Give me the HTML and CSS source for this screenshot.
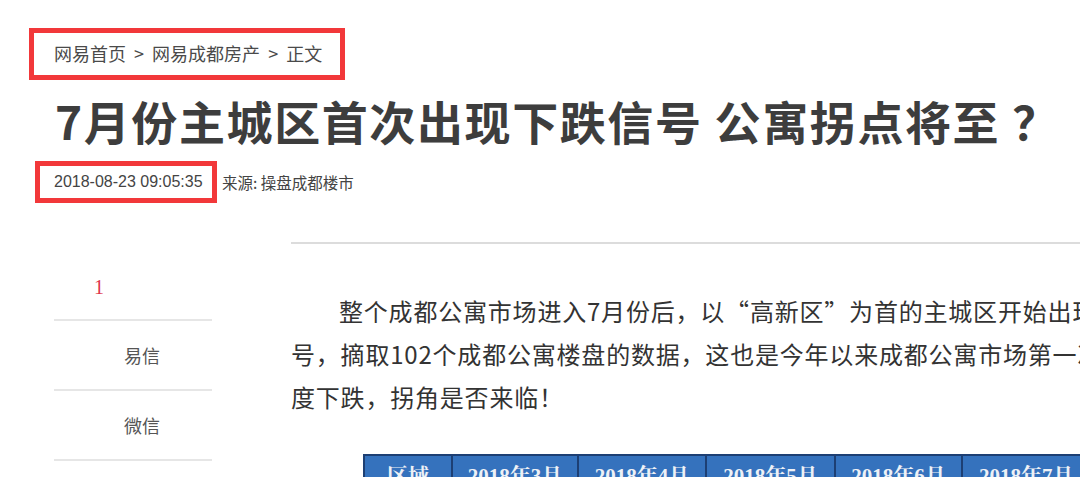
FILE: index.html
```html
<!DOCTYPE html>
<html lang="zh-CN">
<head>
  <meta charset="UTF-8" />
  <title>7月份主城区首次出现下跌信号 公寓拐点将至？</title>
  <link rel="stylesheet" href="styles.css">
</head>
<body>

  <div class="page">
    <div class="crumbs marked">
      网易首页 <span class="sep">&gt;</span> 网易成都房产 <span class="sep">&gt;</span> 正文
    </div>

    <h1>7月份主城区首次出现下跌信号 公寓拐点将至<span class="qmark">？</span></h1>

    <div class="meta">
      <span class="date marked">2018-08-23 09:05:35</span>
      <span class="source">来源: 操盘成都楼市</span>
    </div>

    <div class="main">
      <div class="share">
        <div class="share-count">1</div>
        <div class="share-item">易信</div>
        <div class="share-item">微信</div>
      </div>

      <div class="article">
        <p class="lead">
          <span class="line first">整个成都公寓市场进入7月份后，以“高新区”为首的主城区开始出现下跌信</span>
          <span class="line">号，摘取102个成都公寓楼盘的数据，这也是今年以来成都公寓市场第一次出现月</span>
          <span class="line">度下跌，拐角是否来临！</span>
        </p>

        <table class="data">
          <colgroup>
            <col class="c-area">
            <col class="c-m3">
            <col class="c-m4">
            <col class="c-m5">
            <col class="c-m6">
            <col class="c-m7">
          </colgroup>
          <tr>
            <th>区域</th>
            <th>2018年3月</th>
            <th>2018年4月</th>
            <th>2018年5月</th>
            <th>2018年6月</th>
            <th>2018年7月</th>
          </tr>
        </table>
      </div>
    </div>
  </div>

</body>
</html>
```

FILE: styles.css
```css
body {
  margin: 0;
  background: #fff;
  color: #404040;
  font-family: "Noto Sans CJK SC", "Liberation Sans", sans-serif;
  overflow: hidden;
}

.page {
  width: 1080px;
  padding-top: 28px;
}

.marked {
  border: 5px solid #f2383a;
  box-sizing: border-box;
}

.crumbs {
  display: inline-block;
  margin-left: 29px;
  width: 316px;
  height: 52px;
  padding-left: 20px;
  font-size: 18px;
  line-height: 40px;
  color: #4a4a4a;
  white-space: nowrap;
}

.crumbs .sep {
  margin: 0 4px;
}

h1 {
  margin: 10px 0 0 55px;
  font-size: 46px;
  line-height: 60px;
  font-weight: bold;
  letter-spacing: 1.6px;
  color: #3d3d3d;
  white-space: nowrap;
}

h1 .qmark {
  margin-left: 12px;
}

.meta {
  display: flex;
  align-items: center;
  margin: 11px 0 0 35px;
}

.date {
  display: inline-block;
  width: 182px;
  height: 42px;
  padding-left: 14px;
  font-family: "Liberation Sans", sans-serif;
  font-size: 16px;
  line-height: 32px;
  color: #444;
}

.source {
  margin-left: 5px;
  font-size: 15.5px;
  color: #444;
}

.main {
  display: flex;
  margin-top: 39px;
}

.share {
  width: 158px;
  margin: 0 0 0 54px;
  padding-top: 30px;
  flex-shrink: 0;
}

.share-count {
  height: 43px;
  padding: 4px 0 0 40px;
  font-family: "Liberation Serif", serif;
  font-size: 20px;
  color: #e0354a;
  border-bottom: 2px solid #e6e6e6;
}

.share-item {
  height: 68px;
  line-height: 68px;
  padding-left: 70px;
  font-size: 18px;
  color: #555;
  border-bottom: 2px solid #e6e6e6;
}

.article {
  flex: 1;
  min-width: 0;
  margin-left: 79px;
  border-top: 2px solid #dcdcdc;
  overflow: hidden;
}

.lead {
  margin: 45px 0 0;
  font-size: 24px;
  line-height: 43px;
  letter-spacing: 0.8px;
  color: #333;
  white-space: nowrap;
}

.lead .line {
  display: block;
}

.lead .first {
  text-indent: 48px;
}

.data {
  width: 790px;
  margin: 36px 0 0 72px;
  table-layout: fixed;
  border-collapse: collapse;
  font-family: "Liberation Serif", "Noto Serif CJK SC", serif;
}

.c-area { width: 88px; }
.c-m3 { width: 126px; }
.c-m4 { width: 128px; }
.c-m5 { width: 129px; }
.c-m6 { width: 127px; }
.c-m7 { width: 192px; }

.data th {
  height: 36px;
  padding: 0;
  background: #3572bd;
  color: #eef1f6;
  font-size: 21px;
  font-weight: bold;
  border: 2px solid #1d3f73;
  white-space: nowrap;
  text-align: center;
}

.data th:last-child {
  text-align: left;
  padding-left: 16px;
}
```
